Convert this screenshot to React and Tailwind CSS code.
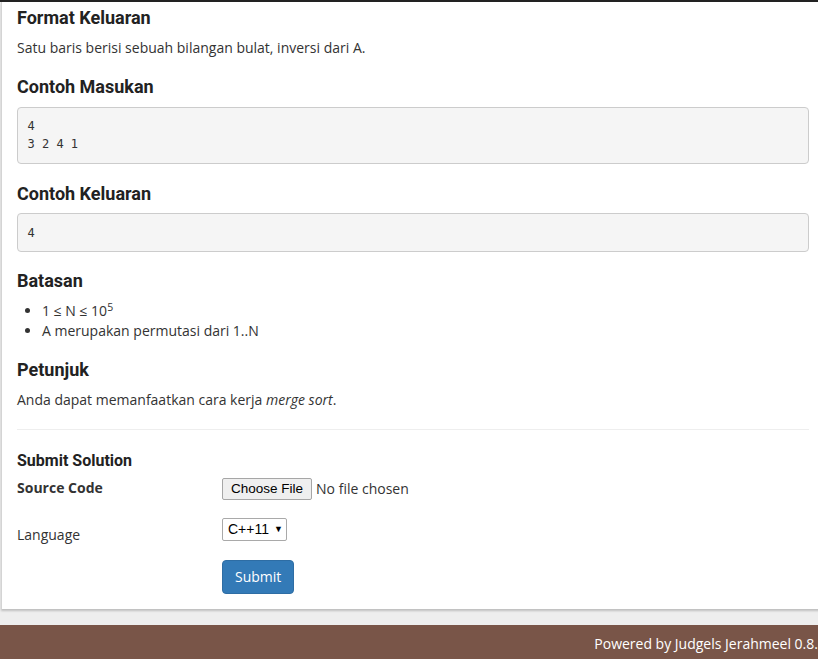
import React from 'react';

const heading = "font-['Roboto',sans-serif] font-bold text-[18px] leading-[1.1] text-[#222]";
const pre = "font-['DejaVu_Sans_Mono',monospace] text-[12px] leading-[18px] text-[#333] bg-[#f5f5f5] border border-[#ccc] rounded-[4px] px-[9.5px] py-[9.5px] whitespace-pre";

const App = () => {
    return (
        <div className="w-full h-[659px] overflow-hidden bg-[#eeeeee] font-['Open_Sans',sans-serif] text-[14px] leading-[20px] text-[#333]">
            <div className="w-[840px]">
                {/* Navbar edge */}
                <div className="h-[2px] bg-[#222]" />

                {/* Problem card */}
                <div className="ml-[1px] w-[824px] bg-white border-l border-r border-[#d4d4d4] shadow-[0_2px_2px_rgba(0,0,0,0.2)] px-[15px] pt-[6px] pb-[15px]">
                    <h3 className={heading}>Format Keluaran</h3>
                    <p className="mt-[10px]">Satu baris berisi sebuah bilangan bulat, inversi dari A.</p>

                    <h3 className={`${heading} mt-[19px]`}>Contoh Masukan</h3>
                    <pre className={`${pre} mt-[10px]`}>{'4\n3 2 4 1'}</pre>

                    <h3 className={`${heading} mt-[20px]`}>Contoh Keluaran</h3>
                    <pre className={`${pre} mt-[10px]`}>4</pre>

                    <h3 className={`${heading} mt-[19px]`}>Batasan</h3>
                    <ul className="list-disc pl-[25px] mt-[10px]">
                        <li className="h-[20px]">1 ≤ N ≤ 10<sup>5</sup></li>
                        <li className="h-[20px]">A merupakan permutasi dari 1..N</li>
                    </ul>

                    <h3 className={`${heading} mt-[19px]`}>Petunjuk</h3>
                    <p className="mt-[10px]">
                        Anda dapat memanfaatkan cara kerja <em>merge sort</em>.
                    </p>

                    <hr className="mt-[19px] border-t border-[#eee]" />

                    {/* Submit form */}
                    <h4 className="font-['Roboto',sans-serif] font-bold text-[16px] leading-[1.1] text-[#222] mt-[22px]">
                        Submit Solution
                    </h4>

                    <div className="flex mt-[8px]">
                        <label className="w-[205px] font-bold">Source Code</label>
                        <div className="flex items-center h-[21px] mt-[1px]">
                            <span className="h-[22px] px-[8px] flex items-center bg-[#efefef] border border-[#a6a6a6] rounded-[2px] font-['Liberation_Sans',Arial,sans-serif] text-[13.5px] text-black">
                                Choose File
                            </span>
                            <span className="ml-[4px]">No file chosen</span>
                        </div>
                    </div>

                    <div className="flex mt-[18px]">
                        <label className="w-[205px] pt-[7px]">Language</label>
                        <div className="h-[23px] w-[65px] border border-[#a9a9a9] rounded-[2px] bg-white flex items-center pl-[5px] font-['Liberation_Sans',Arial,sans-serif] text-[14px] text-black">
                            C++11
                            <span className="ml-[5px] text-[9px] leading-none">▼</span>
                        </div>
                    </div>

                    <div className="flex mt-[15px]">
                        <div className="w-[205px]" />
                        <button className="h-[34px] px-[12px] bg-[#337ab7] border border-[#2e6da4] rounded-[4px] text-white text-[14px]">
                            Submit
                        </button>
                    </div>
                </div>

                {/* Footer */}
                <div className="mt-[16px] h-[40px] bg-[#795548] text-white flex items-center justify-end pr-[14px] pb-[2px]">
                    Powered by Judgels Jerahmeel 0.8.0
                </div>
            </div>
        </div>
    );
};

export default App;
